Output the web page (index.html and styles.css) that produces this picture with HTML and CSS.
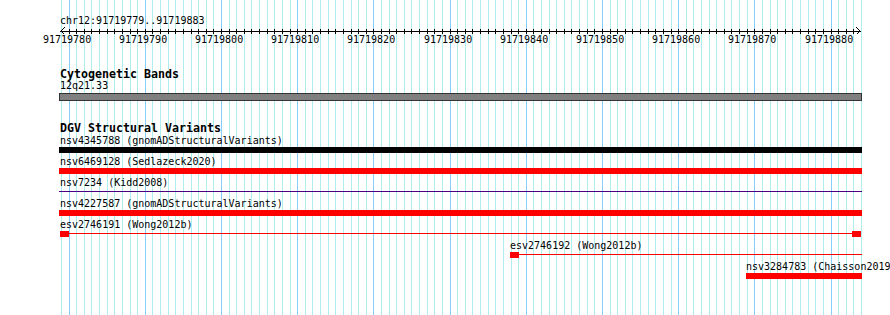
FILE: index.html
```html
<!DOCTYPE html>
<html lang="en">
<head>
	<meta charset="UTF-8">
	<title>chr12:91719779..91719883</title>
	<link rel="stylesheet" href="styles.css">
	<script type="text/javascript">
		window.onload=function(){
			var start=91719779, bases=105, x0=61, span=800;
			var grid=document.getElementById('grid');
			var ticks=document.getElementById('ticks');
			var labels=document.getElementById('scale_labels');
			var ns='http://www.w3.org/2000/svg';
			function px(i){return Math.round(x0+i*span/bases);}

			for(var i=0;i<=bases;i++){
				var line=document.createElement('div');
				line.className=(i%10==1)?'gridline major':'gridline';
				line.style.left=px(i)+'px';
				grid.appendChild(line);

				//每个碱基一个刻度，两端是箭头
				if(i>0&&i<bases){
					var t=document.createElementNS(ns,'rect');
					t.setAttribute('x',px(i));
					t.setAttribute('y',2);
					t.setAttribute('width',1);
					t.setAttribute('height',5);
					ticks.appendChild(t);
				}
				if(i%10==1){
					var s=document.createElement('span');
					s.className='scale-label';
					s.innerHTML=start+i;
					s.style.left=(px(i)-26)+'px';
					labels.appendChild(s);
				}
			}
		};
	</script>
</head>
<body>
	<div id="panel">
		<div id="grid"></div>

		<div class="ruler">
			<div class="ruler-title">chr12:91719779..91719883</div>
			<svg class="axis" width="890" height="8" shape-rendering="crispEdges">
				<rect x="60" y="4" width="801" height="1" />
				<g id="ticks"></g>
				<polyline points="64.5,0.5 61.5,3.5 61.5,4.5 64.5,7.5" />
				<polyline points="856.5,0.5 859.5,3.5 859.5,4.5 856.5,7.5" />
			</svg>
			<div class="scale-labels" id="scale_labels"></div>
		</div>

		<div class="track cyto">
			<div class="track-title">Cytogenetic Bands</div>
			<div class="band-label">12q21.33</div>
			<div class="band"></div>
		</div>

		<div class="track dgv">
			<div class="track-title">DGV Structural Variants</div>
			<div class="rows">
				<div class="row">
					<div class="feature clipped" style="margin-left:59px;width:803px;">
						<div class="feature-label">nsv4345788 (gnomADStructuralVariants)</div>
						<div class="glyph box black"></div>
					</div>
				</div>
				<div class="row">
					<div class="feature clipped" style="margin-left:59px;width:803px;">
						<div class="feature-label">nsv6469128 (Sedlazeck2020)</div>
						<div class="glyph box red"></div>
					</div>
				</div>
				<div class="row">
					<div class="feature clipped" style="margin-left:59px;width:803px;">
						<div class="feature-label">nsv7234 (Kidd2008)</div>
						<div class="glyph line purple"></div>
					</div>
				</div>
				<div class="row">
					<div class="feature clipped" style="margin-left:59px;width:803px;">
						<div class="feature-label">nsv4227587 (gnomADStructuralVariants)</div>
						<div class="glyph box red"></div>
					</div>
				</div>
				<div class="row">
					<div class="feature" style="margin-left:60px;width:801px;">
						<div class="feature-label">esv2746191 (Wong2012b)</div>
						<div class="glyph segments">
							<span class="seg"></span><span class="gap"></span><span class="seg"></span>
						</div>
					</div>
				</div>
				<div class="row">
					<div class="feature" style="margin-left:510px;width:352px;">
						<div class="feature-label">esv2746192 (Wong2012b)</div>
						<div class="glyph segments">
							<span class="seg"></span><span class="gap"></span>
						</div>
					</div>
				</div>
				<div class="row">
					<div class="feature" style="margin-left:746px;width:116px;">
						<div class="feature-label">nsv3284783 (Chaisson2019)</div>
						<div class="glyph box red"></div>
					</div>
				</div>
			</div>
		</div>
	</div>
</body>
</html>
```

FILE: styles.css
```css
*{margin:0;padding:0;}
body{
	background: #fff;
	overflow: hidden;
}
#panel{
	position: relative;
	width: 890px;
	height: 315px;
	overflow: hidden;
	padding-top: 14px;
	box-sizing: border-box;
	font-family: "DejaVu Sans Mono", monospace;
	font-size: 10px;
	color: #000;
	background: #fff;
}
/*网格线在最底层，条形会盖住它*/
#grid{
	position: absolute;
	top: 0;
	left: 0;
	width: 100%;
	height: 100%;
	z-index: 0;
}
.gridline{
	position: absolute;
	top: 0;
	width: 1px;
	height: 100%;
	background: #afeeee;
}
.gridline.major{
	background: #87cefa;
}
.ruler,.track{
	position: relative;
	z-index: 1;
}
.ruler-title{
	padding-left: 60px;
	line-height: 13px;
	white-space: nowrap;
}
.axis{
	display: block;
}
.axis rect{fill: #000;}
.axis polyline{
	fill: none;
	stroke: #000;
	stroke-width: 1;
}
.scale-labels{
	position: relative;
	margin-top: -2px;
	height: 13px;
	line-height: 13px;
}
.scale-label{
	position: absolute;
	top: 0;
	width: 48px;
	white-space: nowrap;
}
.track-title{
	padding-left: 60px;
	font-weight: bold;
	font-size: 11.63px;
	line-height: 11px;
	white-space: nowrap;
}
.cyto{
	margin-top: 23px;
}
.band-label{
	padding-left: 60px;
	line-height: 11px;
}
.band{
	margin: 2px 0 0 59px;
	width: 803px;
	height: 8px;
	box-sizing: border-box;
	border: 1px solid #333;
	background: #808080;
}
.dgv{
	margin-top: 22px;
}
.rows{
	margin-top: 1px;
}
.row{
	height: 18px;
	margin-bottom: 3px;
}
.feature-label{
	line-height: 11px;
	white-space: nowrap;
}
.clipped .feature-label{
	padding-left: 1px;
}
.glyph{
	margin-top: 1px;
	height: 6px;
}
.box.red{background: #f00;}
.box.black{background: #000;}
.line{
	position: relative;
}
.line.purple{
	background: linear-gradient(#4b0082,#4b0082) 0 2px/100% 1px no-repeat;
}
.segments{
	display: flex;
}
.seg{
	width: 9px;
	height: 6px;
	background: #f00;
}
.gap{
	flex: 1;
	background: linear-gradient(#f00,#f00) 0 2px/100% 1px no-repeat;
}
```
